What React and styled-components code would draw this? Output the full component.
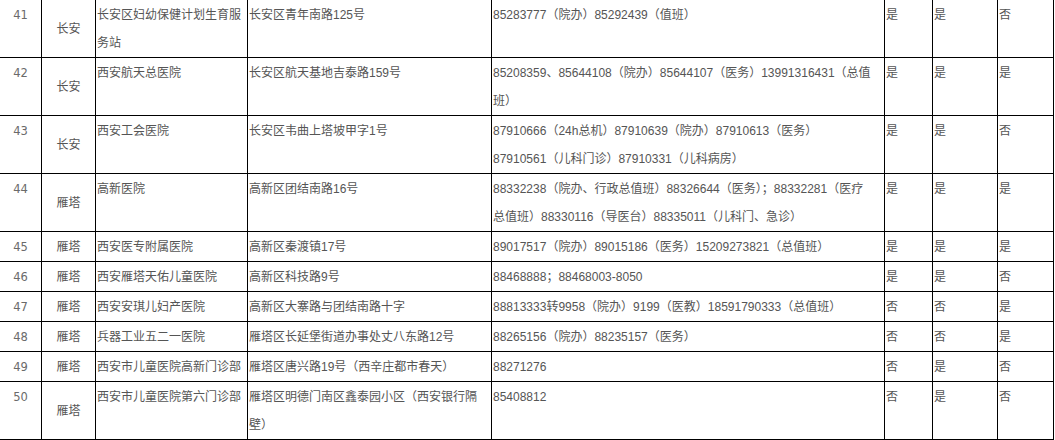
import React from 'react'
import styled, { createGlobalStyle } from 'styled-components'

const GlobalStyle = createGlobalStyle`
  html, body {
    margin: 0;
    padding: 0;
    background: #fff;
  }
  body {
    font-family: "Liberation Sans", "Noto Sans CJK SC", sans-serif;
    font-size: 12px;
    color: #555;
    overflow: hidden;
  }
`

const rows = [
  {
    no: 41,
    area: '长安',
    name: ['长安区妇幼保健计划生育服', '务站'],
    addr: ['长安区青年南路125号'],
    phone: ['85283777（院办）85292439（值班）'],
    flags: ['是', '是', '否'],
  },
  {
    no: 42,
    area: '长安',
    name: ['西安航天总医院'],
    addr: ['长安区航天基地吉泰路159号'],
    phone: ['85208359、85644108（院办）85644107（医务）13991316431（总值', '班）'],
    flags: ['是', '是', '是'],
  },
  {
    no: 43,
    area: '长安',
    name: ['西安工会医院'],
    addr: ['长安区韦曲上塔坡甲字1号'],
    phone: ['87910666（24h总机）87910639（院办）87910613（医务）', '87910561（儿科门诊）87910331（儿科病房）'],
    flags: ['是', '是', '否'],
  },
  {
    no: 44,
    area: '雁塔',
    name: ['高新医院'],
    addr: ['高新区团结南路16号'],
    phone: ['88332238（院办、行政总值班）88326644（医务）；88332281（医疗', '总值班）88330116（导医台）88335011（儿科门、急诊）'],
    flags: ['是', '是', '是'],
  },
  {
    no: 45,
    area: '雁塔',
    name: ['西安医专附属医院'],
    addr: ['高新区秦渡镇17号'],
    phone: ['89017517（院办）89015186（医务）15209273821（总值班）'],
    flags: ['是', '是', '是'],
  },
  {
    no: 46,
    area: '雁塔',
    name: ['西安雁塔天佑儿童医院'],
    addr: ['高新区科技路9号'],
    phone: ['88468888；88468003-8050'],
    flags: ['是', '是', '否'],
  },
  {
    no: 47,
    area: '雁塔',
    name: ['西安安琪儿妇产医院'],
    addr: ['高新区大寨路与团结南路十字'],
    phone: ['88813333转9958（院办）9199（医教）18591790333（总值班）'],
    flags: ['否', '否', '是'],
  },
  {
    no: 48,
    area: '雁塔',
    name: ['兵器工业五二一医院'],
    addr: ['雁塔区长延堡街道办事处丈八东路12号'],
    phone: ['88265156（院办）88235157（医务）'],
    flags: ['否', '否', '是'],
  },
  {
    no: 49,
    area: '雁塔',
    name: ['西安市儿童医院高新门诊部'],
    addr: ['雁塔区唐兴路19号（西辛庄都市春天）'],
    phone: ['88271276'],
    flags: ['否', '是', '否'],
  },
  {
    no: 50,
    area: '雁塔',
    name: ['西安市儿童医院第六门诊部'],
    addr: ['雁塔区明德门南区鑫泰园小区（西安银行隔', '壁）'],
    phone: ['85408812'],
    flags: ['否', '是', '否'],
  },
]

const widths = [42, 54, 152, 244, 393, 48, 65, 56]

const Lines = ({ items }) =>
  items.map((line, i) => (
    <React.Fragment key={i}>
      {i > 0 && <br />}
      {line}
    </React.Fragment>
  ))

const App = () => (
  <>
    <GlobalStyle />
    <Table>
      <colgroup>
        {widths.map((w, i) => (
          <col key={i} style={{ width: w }} />
        ))}
      </colgroup>
      <tbody>
        {rows.map((r) => (
          <tr key={r.no}>
            <NumCell>{r.no}</NumCell>
            <AreaCell>{r.area}</AreaCell>
            <Cell><Lines items={r.name} /></Cell>
            <Cell><Lines items={r.addr} /></Cell>
            <Cell $nowrap><Lines items={r.phone} /></Cell>
            {r.flags.map((f, i) => (
              <Cell key={i}>{f}</Cell>
            ))}
          </tr>
        ))}
      </tbody>
    </Table>
  </>
)

const Table = styled.table`
  border-collapse: collapse;
  table-layout: fixed;
  width: 1055px;
  margin: -1px 0 0 -1px;
`

const Cell = styled.td`
  border: 1px solid #000;
  padding: 1px 0 0 1px;
  line-height: 28px;
  vertical-align: top;
  text-align: left;
  white-space: ${({ $nowrap }) => ($nowrap ? 'nowrap' : 'normal')};
  overflow: visible;
`

const NumCell = styled(Cell)`
  text-align: center;
  padding-left: 0;
  color: #6a6a6a;
  font-family: "DejaVu Sans", "Liberation Sans", sans-serif;
  font-size: 11.5px;
`

const AreaCell = styled(Cell)`
  text-align: center;
  vertical-align: middle;
  padding-left: 0;
`

export default App
